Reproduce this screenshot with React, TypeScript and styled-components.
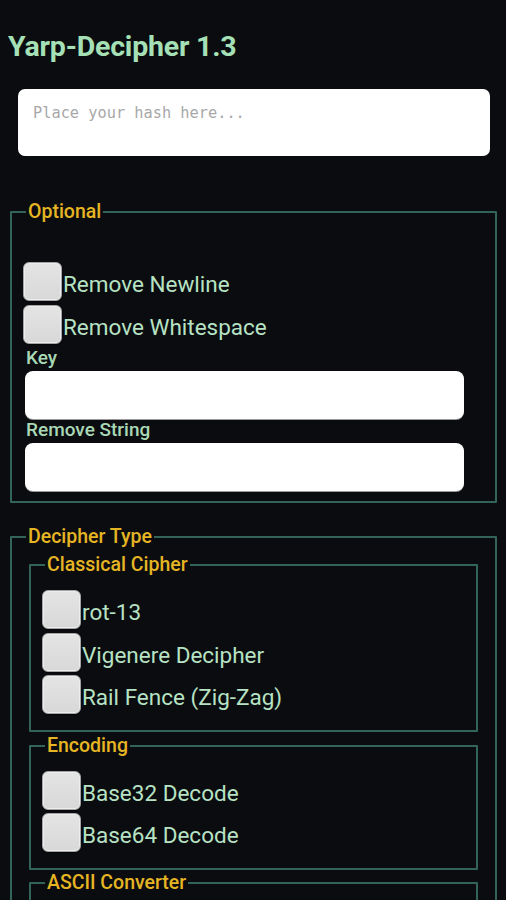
import React from "react";
import styled, { createGlobalStyle } from "styled-components";

const Global = createGlobalStyle`
  html, body { margin: 0; padding: 0; background: #0a0c10; }
  body { font-family: Roboto, "Noto Sans", sans-serif; }
  * { box-sizing: border-box; }
`;

const Page = styled.div`
  background: #0a0c10;
  min-height: 900px;
  padding: 0 0 40px 0;
`;

const Title = styled.h1`
  margin: 0;
  padding: 30px 0 0 8px;
  font-family: Roboto, sans-serif;
  font-weight: 700;
  font-size: 28.5px;
  line-height: 34px;
  color: #a6e0b6;
  letter-spacing: -0.2px;
`;

const HashArea = styled.textarea`
  display: block;
  margin: 25px 0 0 18px;
  width: 472px;
  height: 67px;
  border: none;
  border-radius: 7px;
  background: #ffffff;
  padding: 15px 15px;
  font-family: "DejaVu Sans Mono", monospace;
  font-size: 15.3px;
  line-height: 18px;
  resize: none;
  outline: none;
  &::placeholder { color: #a8a8a8; }
`;

const Fieldset = styled.fieldset<{ $top: number; $pt: number; $pb: number; $nested?: boolean }>`
  margin: ${(p) => p.$top}px ${(p) => (p.$nested ? "17px" : "9px")} 0 ${(p) => (p.$nested ? "6px" : "10px")};
  padding: ${(p) => p.$pt}px 0 ${(p) => p.$pb}px 11px;
  border: 2px solid #33645a;
  border-radius: 1px;
  min-width: 0;
`;

const Legend = styled.legend`
  margin-left: 3px;
  padding: 0 2px;
  font-family: Roboto, sans-serif;
  font-weight: 500;
  font-size: 19.5px;
  line-height: 22px;
  color: #e6b523;
`;

const Row = styled.label`
  display: flex;
  align-items: center;
  height: 39px;
  margin-bottom: 3.5px;
  font-family: Roboto, sans-serif;
  font-size: 22.5px;
  color: #b7e2c3;
  cursor: pointer;
`;

const RowText = styled.span`
  padding-top: 5px;
`;

const Box = styled.input`
  appearance: none;
  -webkit-appearance: none;
  margin: 0 1px 0 0;
  width: 39px;
  height: 39px;
  flex: none;
  border-radius: 6px;
  border: 1.5px solid #a4a4a4;
  background: linear-gradient(#e4e4e4, #d8d8d8);
  box-shadow: inset 0 0 0 1px #ededed, 0 1px 1px rgba(0, 0, 0, 0.5);
`;

const FieldLabel = styled.div`
  margin-left: 3px;
  font-family: Roboto, sans-serif;
  font-weight: 500;
  font-size: 19px;
  line-height: 22px;
  color: #a9d8b5;
`;

const TextInput = styled.input`
  display: block;
  margin: 2px 0 0 2px;
  width: 439px;
  height: 48px;
  border: none;
  border-radius: 8px;
  background: #ffffff;
  box-shadow: 0 1px 0 #9a9a9a;
  outline: none;
  font-size: 18px;
  padding: 0 10px;
`;

const Check = ({ label }: { label: string }) => (
  <Row>
    <Box type="checkbox" />
    <RowText>{label}</RowText>
  </Row>
);

export default function App() {
  return (
    <Page>
      <Global />
      <Title>Yarp-Decipher 1.3</Title>
      <HashArea placeholder="Place your hash here..." />

      <Fieldset $top={45} $pt={39} $pb={10}>
        <Legend>Optional</Legend>
        <Check label="Remove Newline" />
        <Check label="Remove Whitespace" />
        <FieldLabel>Key</FieldLabel>
        <TextInput type="text" />
        <FieldLabel>Remove String</FieldLabel>
        <TextInput type="text" />
      </Fieldset>

      <Fieldset $top={23} $pt={6} $pb={12}>
        <Legend>Decipher Type</Legend>
        <Fieldset $nested $top={0} $pt={14} $pb={12}>
          <Legend>Classical Cipher</Legend>
          <Check label="rot-13" />
          <Check label="Vigenere Decipher" />
          <Check label="Rail Fence (Zig-Zag)" />
        </Fieldset>
        <Fieldset $nested $top={3} $pt={14} $pb={12}>
          <Legend>Encoding</Legend>
          <Check label="Base32 Decode" />
          <Check label="Base64 Decode" />
        </Fieldset>
        <Fieldset $nested $top={2} $pt={14} $pb={12}>
          <Legend>ASCII Converter</Legend>
          <Check label="Binary to Text" />
          <Check label="Hex to Text" />
        </Fieldset>
      </Fieldset>
    </Page>
  );
}
